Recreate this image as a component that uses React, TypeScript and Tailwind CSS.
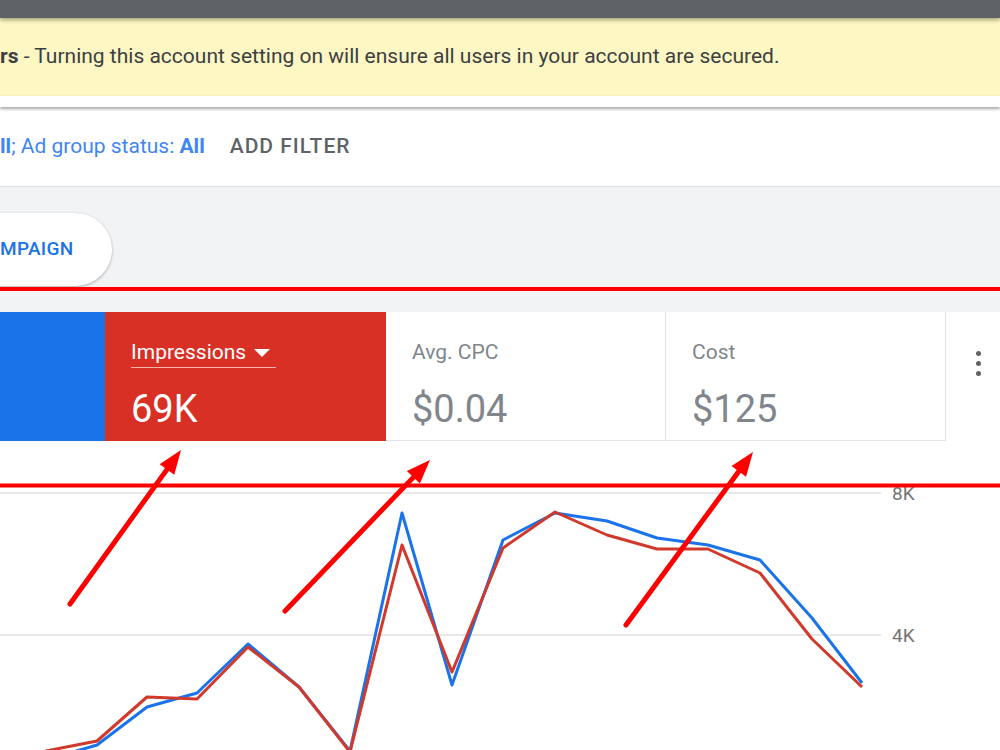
import React from "react";

const blue: [number, number][] = [[46,760],[97,745],[147,707],[197,693],[248,644],[299,687],[350,751],[402,513],[452,685],[503,540],[555,513],[607,521],[657,538],[708,545],[760,560],[812,618],[862,683]];
const red: [number, number][] = [[46,751],[97,741],[147,697],[197,699],[248,647],[299,687],[350,752],[402,545],[452,672],[503,548],[555,512],[607,535],[657,549],[708,549],[760,573],[812,639],[862,687]];

function pts(a: [number, number][]) {
  return a.map((p) => p.join(",")).join(" ");
}

function Arrow({ x1, y1, x2, y2 }: { x1: number; y1: number; x2: number; y2: number }) {
  const dx = x2 - x1;
  const dy = y2 - y1;
  const len = Math.hypot(dx, dy);
  const ux = dx / len;
  const uy = dy / len;
  const hl = 24;
  const hw = 9;
  const bx = x2 - ux * hl;
  const by = y2 - uy * hl;
  const nx = -uy * hw;
  const ny = ux * hw;
  return (
    <g>
      <line x1={x1} y1={y1} x2={bx + ux * 2} y2={by + uy * 2} stroke="#ff0000" strokeWidth={5} strokeLinecap="round" />
      <polygon points={`${x2},${y2} ${bx + nx},${by + ny} ${bx - nx},${by - ny}`} fill="#ff0000" />
    </g>
  );
}

export default function App() {
  return (
    <div className="relative w-[1000px] h-[750px] overflow-hidden bg-white font-['Roboto',sans-serif]">
      <div className="relative z-20 h-[18px] bg-[#5f6368] shadow-[0_2px_4px_rgba(0,0,0,0.35)]" />
      <div className="h-[78px] bg-[#fdf7c3] flex items-center text-[21px] text-[#3c4043] whitespace-nowrap">
        <span className="font-bold">rs</span>
        <span>&nbsp;- Turning this account setting on will ensure all users in your account are secured.</span>
      </div>
      <div className="relative z-10 h-[11px] bg-white shadow-[0_2px_3px_rgba(0,0,0,0.35)]" />
      <div className="h-[80px] flex items-center border-b border-[#dadce0] whitespace-nowrap">
        <span className="text-[21px] text-[#4285f4]">
          <span className="font-bold">ll</span>; Ad group status: <span className="font-bold">All</span>
        </span>
        <span className="ml-[25px] text-[21px] font-medium tracking-[1px] text-[#5f6368]">ADD FILTER</span>
      </div>
      <div className="h-[125px] bg-[#f1f3f4] pt-[26px]">
        <div className="-ml-[60px] w-[172px] h-[73px] rounded-full bg-white shadow-[0_1px_3px_rgba(0,0,0,0.3)] flex items-center pl-[60px]">
          <span className="text-[19px] font-medium tracking-[0.3px] text-[#1a73e8]">MPAIGN</span>
        </div>
      </div>
      <div className="flex h-[129px]">
        <div className="w-[105px] bg-[#1a73e8]" />
        <div className="w-[281px] bg-[#d93025] pl-[26px] pt-[28px] text-white">
          <div className="inline-flex items-center border-b border-[#f4b4ae] pb-[2px] pr-[6px] text-[21px] leading-[25px]">
            Impressions
            <svg width="16" height="10" viewBox="0 0 16 10" className="ml-[8px]">
              <polygon points="0,1 16,1 8,9" fill="#ffffff" />
            </svg>
          </div>
          <div className="mt-[19px] text-[38px] leading-[44px]">69K</div>
        </div>
        <div className="w-[280px] border-r border-b border-[#e3e5e8] pl-[26px] pt-[28px] text-[#80868b]">
          <div className="text-[21px] leading-[25px]">Avg. CPC</div>
          <div className="mt-[22px] text-[38px] leading-[44px]">$0.04</div>
        </div>
        <div className="w-[280px] border-r border-b border-[#e3e5e8] pl-[26px] pt-[28px] text-[#80868b]">
          <div className="text-[21px] leading-[25px]">Cost</div>
          <div className="mt-[22px] text-[38px] leading-[44px]">$125</div>
        </div>
        <div className="flex-1 flex justify-center pt-[39px]">
          <div className="flex flex-col gap-[5px] ml-[11px]">
            <span className="w-[5px] h-[5px] rounded-full bg-[#5f6368]" />
            <span className="w-[5px] h-[5px] rounded-full bg-[#5f6368]" />
            <span className="w-[5px] h-[5px] rounded-full bg-[#5f6368]" />
          </div>
        </div>
      </div>
      <div className="h-[309px]">
        <svg width="1000" height="309" viewBox="0 441 1000 309">
          <line x1="0" y1="493" x2="881" y2="493" stroke="#e0e0e0" strokeWidth="1.5" />
          <line x1="0" y1="635" x2="881" y2="635" stroke="#e0e0e0" strokeWidth="1.5" />
          <text x="892" y="500" fontSize="19" fill="#757575" fontFamily="Roboto, sans-serif">8K</text>
          <text x="892" y="642" fontSize="19" fill="#757575" fontFamily="Roboto, sans-serif">4K</text>
          <polyline points={pts(blue)} fill="none" stroke="#1a73e8" strokeWidth="3" strokeLinejoin="round" />
          <polyline points={pts(red)} fill="none" stroke="#d0392b" strokeWidth="3" strokeLinejoin="round" />
        </svg>
      </div>
      <svg className="absolute left-0 top-0 pointer-events-none" width="1000" height="750" viewBox="0 0 1000 750">
        <rect x="0" y="287" width="1000" height="4" fill="#ff0000" />
        <rect x="0" y="483.5" width="1000" height="4" fill="#ff0000" />
        <Arrow x1={70} y1={604} x2={181} y2={450} />
        <Arrow x1={285} y1={611} x2={430} y2={460} />
        <Arrow x1={626} y1={625} x2={753} y2={452} />
      </svg>
    </div>
  );
}
